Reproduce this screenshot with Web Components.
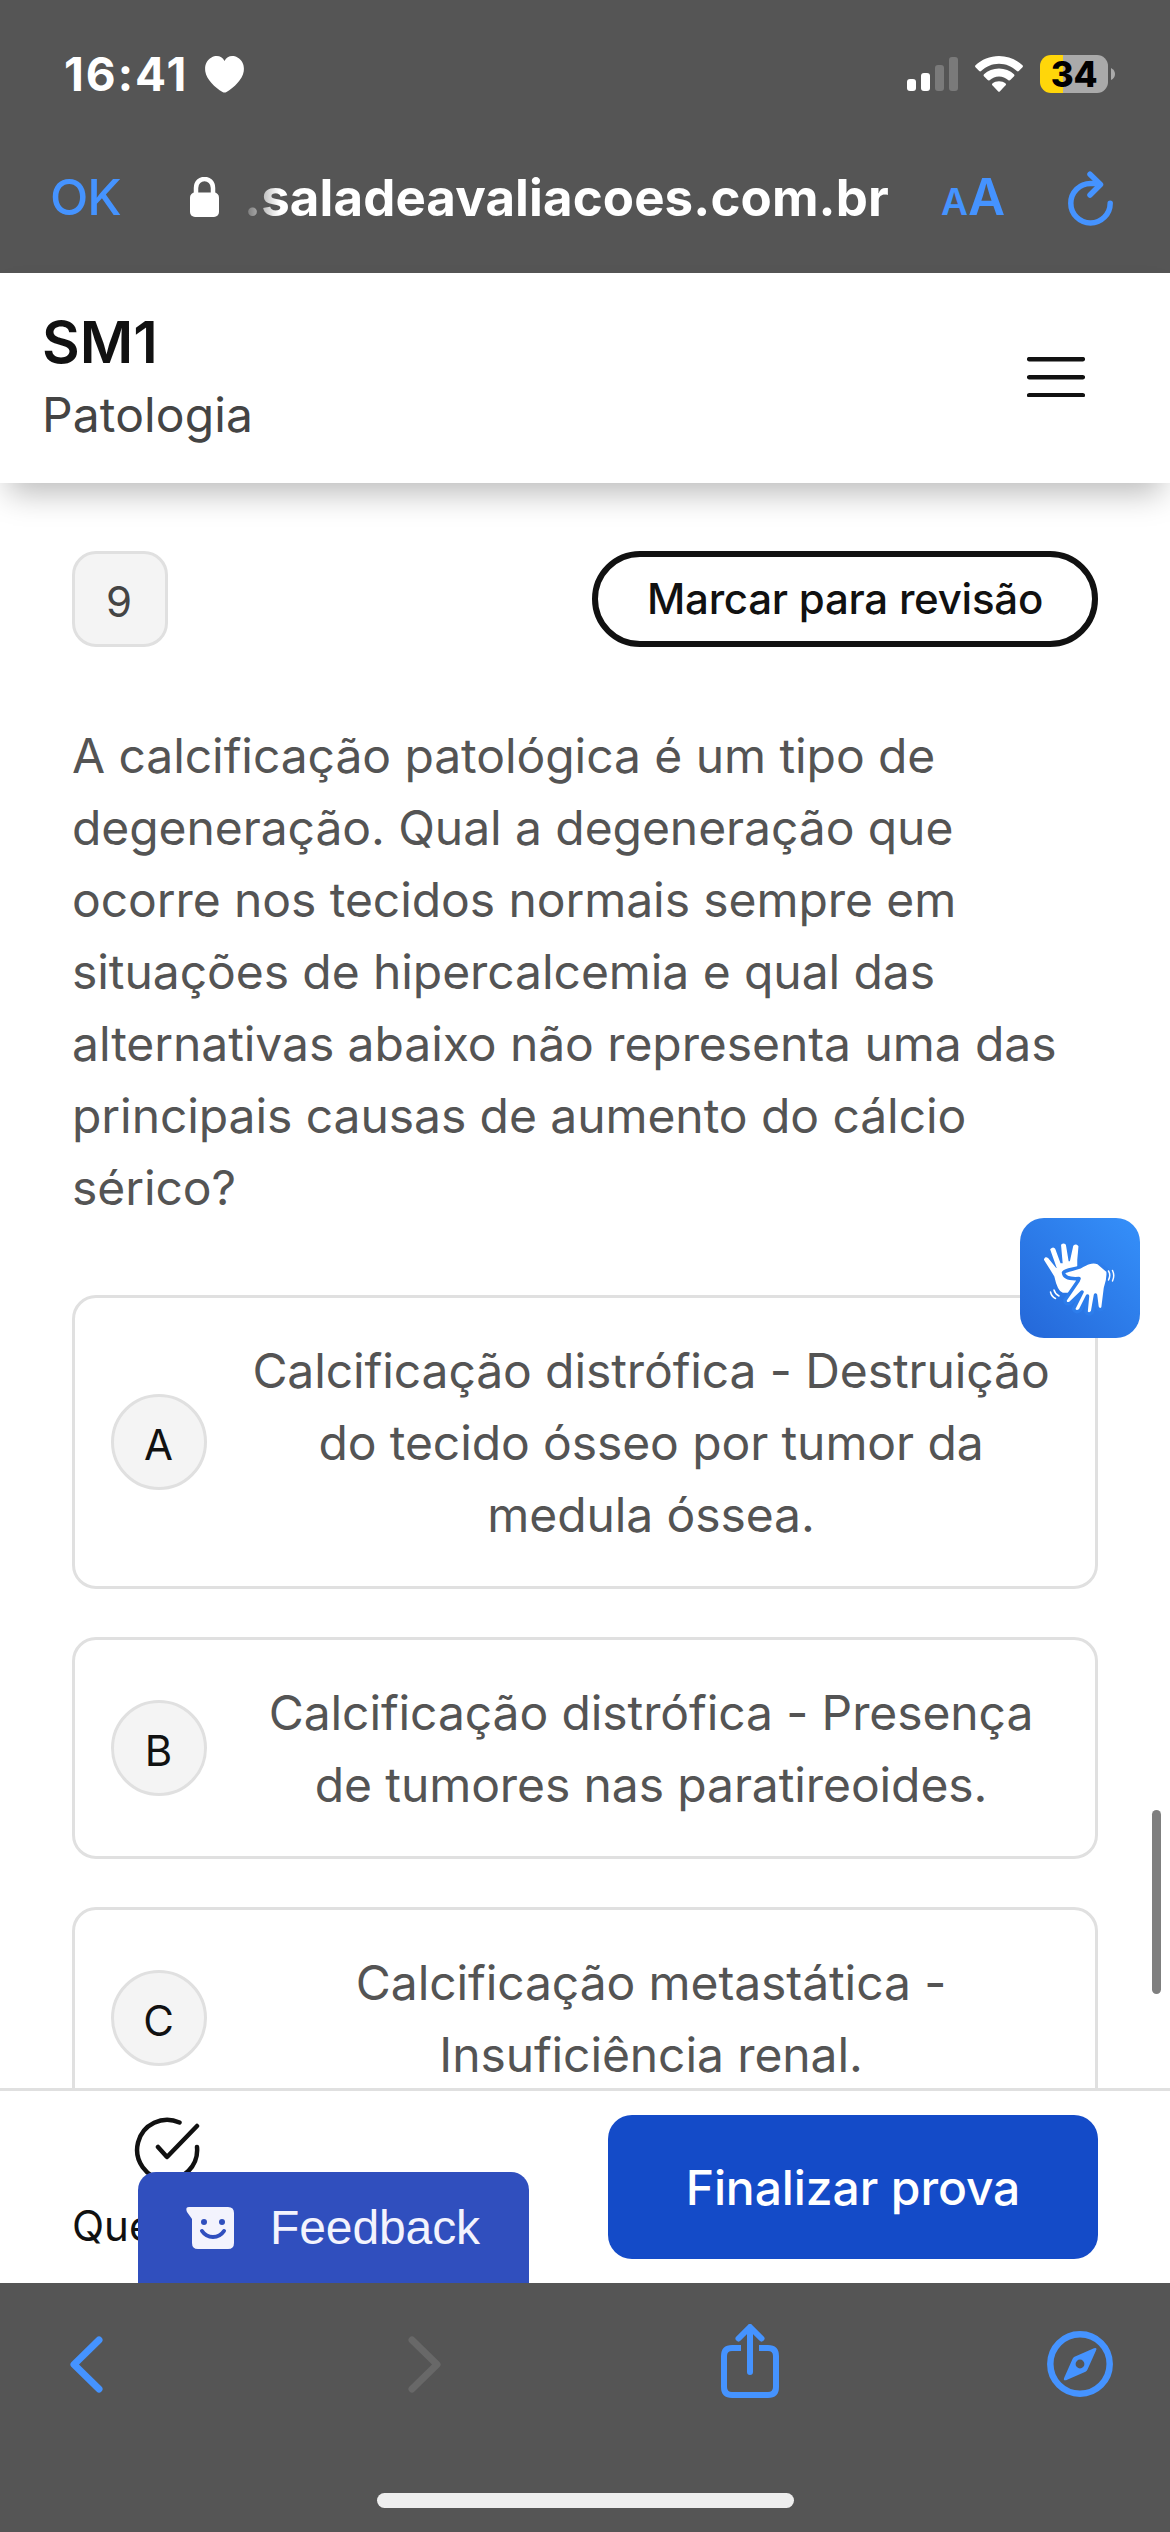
<!DOCTYPE html>
<html lang="pt-BR">
<head>
<meta charset="utf-8">
<title>Sala de Avaliações</title>
<style>
  html, body {
    margin: 0;
    padding: 0;
  }

  body {
    width: 1170px;
    height: 2532px;
    overflow: hidden;
    background: #fff;
    font-family: Inter, "Liberation Sans", sans-serif;
  }
</style>
</head>
<body>
<exam-screen>
  <status-bar slot="top" time="16:41" battery="34"></status-bar>
  <address-bar slot="top" host=".saladeavaliacoes.com.br"></address-bar>
  <exam-header slot="header">
    <span slot="title">SM1</span>
    <span slot="subject">Patologia</span>
  </exam-header>

  <exam-question number="9">
    A calcificação patológica é um tipo de degeneração. Qual a degeneração que ocorre nos tecidos normais sempre em situações de hipercalcemia e qual das alternativas abaixo não representa uma das principais causas de aumento do cálcio sérico?
    <answer-option slot="options" letter="A">Calcificação distrófica - Destruição do tecido ósseo por tumor da medula óssea.</answer-option>
    <answer-option slot="options" letter="B">Calcificação distrófica - Presença de tumores nas paratireoides.</answer-option>
    <answer-option slot="options" letter="C">Calcificação metastática - Insuficiência renal.</answer-option>
  </exam-question>

  <exam-footer slot="footer">Finalizar prova</exam-footer>
  <browser-toolbar slot="bottom"></browser-toolbar>
</exam-screen>

<script>
function define(name, html, init) {
  const template = document.createElement('template');
  template.innerHTML = html;

  customElements.define(name, class extends HTMLElement {
    constructor() {
      super();
      this.attachShadow({ mode: 'open' });
      this.shadowRoot.appendChild(template.content.cloneNode(true));
    }

    connectedCallback() {
      if (init) init(this, this.shadowRoot);
    }
  });
}

define('status-bar', `
  <style>
    :host {
      display: flex;
      justify-content: space-between;
      box-sizing: border-box;
      height: 148px;
      padding: 0 55px 0 64px;
      color: #fff;
    }
    .left, .right {
      display: flex;
      align-items: center;
      height: 148px;
    }
    .time {
      font-size: 46px;
      font-weight: 750;
      letter-spacing: 2px;
      width: 141px;
    }
    .signal { margin-right: 17px; }
    .wifi { margin-right: 17px; }
    svg { display: block; }
    .battery {
      display: flex;
      align-items: center;
      justify-content: center;
      width: 68px;
      height: 38px;
      border-radius: 11px;
      background: linear-gradient(90deg, #ffd60a 23px, #aaa 23px);
      color: #000;
      font-size: 35px;
      font-weight: 800;
      letter-spacing: -0.3px;
    }
    .nub { margin-left: 3px; }
  </style>
  <div class="left">
    <span class="time"></span>
    <svg width="39" height="37" viewBox="0 0 39 37"><path fill="#fff" d="M19.5 5C22-.5 28-1 32.500 1.500C38 4.600 39.500 10 38.700 15.500C37.500 23.500 29 31.500 21.500 36Q19.500 37 17.500 36C10 31.500 1.500 23.500 .3 15.500C-.5 10 1 4.600 6.500 1.500C11-1 17-.5 19.500 5Z"/></svg>
  </div>
  <div class="right">
    <svg class="signal" width="51" height="34" viewBox="0 0 51 34">
      <rect x="0" y="22" width="9" height="12" rx="3" fill="#fff"/>
      <rect x="14" y="16" width="9" height="18" rx="3" fill="#fff"/>
      <rect x="28" y="8" width="9" height="26" rx="3" fill="#7a7a7a"/>
      <rect x="42" y="0" width="9" height="34" rx="3" fill="#7a7a7a"/>
    </svg>
    <svg class="wifi" width="48" height="36" viewBox="0 0 48 36" fill="#fff">
      <path d="M24 0C33 0 41.500 3.600 47.500 9.300Q48.400 10.200 47.500 11.200L43.800 15.100Q42.900 16 41.900 15.100C37 10.500 30.800 7.800 24 7.800S11 10.500 6.100 15.100Q5.100 16 4.200 15.100L.5 11.200Q-.4 10.200 .5 9.300C6.500 3.600 15 0 24 0Z"/>
      <path d="M24 12.500C29.900 12.500 35 14.600 39 18.200Q40 19.200 39.100 20.200L35.300 24.100Q34.400 25 33.400 24.200C30.700 21.900 27.500 20.400 24 20.400S17.300 21.900 14.600 24.200Q13.600 25 12.700 24.100L8.900 20.200Q8 19.200 9 18.200C13 14.600 18.100 12.500 24 12.500Z"/>
      <path d="M24 25.200C26.500 25.200 28.800 26 30.600 27.400Q31.500 28.300 30.600 29.300L25 35.200Q24 36.200 23 35.200L17.400 29.300Q16.500 28.300 17.400 27.400C19.200 26 21.500 25.200 24 25.200Z"/>
    </svg>
    <div class="battery"></div>
    <svg class="nub" width="4" height="12" viewBox="0 0 4 12"><path fill="#aaa" d="M0 0Q4 2 4 6T0 12Z"/></svg>
  </div>
`, (host, root) => {
  root.querySelector('.time').textContent = host.getAttribute('time');
  root.querySelector('.battery').textContent = host.getAttribute('battery');
});

define('address-bar', `
  <style>
    :host {
      display: flex;
      align-items: center;
      box-sizing: border-box;
      height: 125px;
      padding: 0 56px 27px 50px;
      color: #4593ff;
    }
    .ok {
      width: 140px;
      font-size: 50px;
      font-weight: 550;
      letter-spacing: -1px;
    }
    .host {
      width: 722px;
      padding-left: 25px;
      box-sizing: border-box;
      color: #fff;
      font-size: 51px;
      font-weight: 750;
      letter-spacing: 0.1px;
      white-space: nowrap;
      -webkit-mask-image: linear-gradient(90deg, transparent 18px, #000 60px);
      mask-image: linear-gradient(90deg, transparent 18px, #000 60px);
    }
    .size {
      display: flex;
      align-items: baseline;
      font-weight: 600;
      line-height: 60px;
      padding-top: 5px;
    }
    .size small { font-size: 37px; }
    .size span { font-size: 51px; }
    .gap { flex: 1; }
    svg { display: block; }
    .reload { margin-top: 4px; }
  </style>
  <span class="ok">OK</span>
  <svg width="29" height="40" viewBox="0 0 29 40">
    <rect y="15.500" width="29" height="24.500" rx="5" fill="#fff"/>
    <path d="M6 18V11C6 -1 23 -1 23 11V18" fill="none" stroke="#fff" stroke-width="4.500"/>
  </svg>
  <span class="host"></span>
  <span class="size"><small>A</small><span>A</span></span>
  <span class="gap"></span>
  <svg class="reload" width="46" height="56" viewBox="0 0 46 56" fill="none" stroke="#4593ff" stroke-width="5.500" stroke-linecap="round" stroke-linejoin="round">
    <path d="M42.200 32.200A19.700 19.700 0 1 1 22.500 12.500H29"/>
    <path d="M22 3.200L32.500 13.500L22 24"/>
  </svg>
`, (host, root) => {
  root.querySelector('.host').textContent = host.getAttribute('host');
});

define('exam-header', `
  <style>
    :host {
      display: flex;
      justify-content: space-between;
      box-sizing: border-box;
      height: 210px;
      padding: 34px 85px 0 42px;
      background: #fff;
      box-shadow: 0 18px 30px -8px rgba(0, 0, 0, 0.27);
    }
    .title {
      color: #111;
      font-size: 58px;
      font-weight: 600;
      line-height: 70px;
      letter-spacing: 0;
    }
    .subject {
      padding-top: 2px;
      color: #444;
      font-size: 48px;
      line-height: 72px;
      letter-spacing: 0.1px;
    }
    svg { margin-top: 50px; }
  </style>
  <div>
    <div class="title"><slot name="title"></slot></div>
    <div class="subject"><slot name="subject"></slot></div>
  </div>
  <svg width="58" height="40" viewBox="0 0 58 40" stroke="#111" stroke-width="4.500" stroke-linecap="round">
    <path d="M2.200 2.200H55.800M2.200 20.200H55.800M2.200 38.200H55.800"/>
  </svg>
`);

define('exam-question', `
  <style>
    :host {
      display: block;
      padding: 68px 72px 0;
    }
    .head {
      display: flex;
      justify-content: space-between;
      margin-bottom: 73px;
    }
    .number {
      display: flex;
      align-items: center;
      justify-content: center;
      box-sizing: border-box;
      width: 96px;
      height: 96px;
      padding: 5px 2px 0 0;
      border: 3px solid #e0e0e0;
      border-radius: 24px;
      background: #f4f4f4;
      color: #444;
      font-size: 42px;
    }
    button {
      box-sizing: border-box;
      width: 506px;
      height: 96px;
      padding: 0 0 2px;
      border: 6px solid #111;
      border-radius: 48px;
      background: #fff;
      color: #111;
      font: 500 42px Inter, sans-serif;
      letter-spacing: -0.25px;
    }
    .text {
      color: #545454;
      font-size: 48px;
      line-height: 72px;
      letter-spacing: -0.07px;
    }
    .options {
      display: flex;
      flex-direction: column;
      gap: 48px;
      margin-top: 71px;
    }
  </style>
  <div class="head">
    <div class="number"></div>
    <button>Marcar para revisão</button>
  </div>
  <div class="text"><slot></slot></div>
  <div class="options"><slot name="options"></slot></div>
`, (host, root) => {
  root.querySelector('.number').textContent = host.getAttribute('number');
});

define('answer-option', `
  <style>
    :host {
      display: flex;
      align-items: center;
      gap: 36px;
      padding: 37px 36px 35px;
      border: 3px solid #e0e0e0;
      border-radius: 24px;
      background: #fff;
    }
    .letter {
      display: flex;
      flex: none;
      align-items: center;
      justify-content: center;
      box-sizing: border-box;
      width: 96px;
      height: 96px;
      margin-top: -2px;
      padding: 5px 1px 0 0;
      border: 3px solid #e0e0e0;
      border-radius: 50%;
      background: #f4f4f4;
      color: #111;
      font-size: 42px;
      letter-spacing: 0;
    }
    .text {
      flex: 1;
      color: #545454;
      font-size: 48px;
      line-height: 72px;
      letter-spacing: -0.1px;
      text-align: center;
    }
  </style>
  <div class="letter"></div>
  <div class="text"><slot></slot></div>
`, (host, root) => {
  root.querySelector('.letter').textContent = host.getAttribute('letter');
});

define('libras-button', `
  <style>
    :host {
      display: block;
      width: 120px;
      height: 120px;
      border-radius: 24px;
      background: linear-gradient(45deg, #2467d8, #3590fa);
    }
    svg { display: block; }
  </style>
  <svg width="120" height="120" viewBox="0 0 120 120" fill="none" stroke-linecap="round" stroke-linejoin="round">
    <path fill="#fff" stroke="#fff" stroke-width="1.500" d="M24.700 41.500L35 58C36.500 65 39 73 43 74H50L59 62L47 60Q42 55 46 51L56.500 49V42L57.700 28.500Q56 26.500 54 28L50.500 44L48 44L45.200 27Q43.500 25.500 41.800 27L43.500 46L40 46L34.500 31Q32.500 29.500 31 31.500L37.500 50L36 51L27.500 40.500Q25.500 39 24.700 41.500Z"/>
    <path fill="#fff" stroke="#2d7deb" stroke-width="3.500" d="M43.500 54.500C46 51.500 54 51.500 60 49C66 45.500 71 42.500 78 44.500L88 53Q89 60 85.500 70L83 90Q79.500 94 77 89L75.500 77L72.500 94Q69 98 66 94L67.500 78L60.500 92Q56 96 53.500 91L62 74L50.500 85Q45 87.500 45 82L58 63L59 60.500C52 61 44 60 43.500 54.500Z"/>
    <path stroke="#fff" stroke-width="1.500" d="M88.500 53Q91 57 88.500 62M92.500 52.500Q95 57.500 92.500 63M34 72Q35 76 39 78M30.500 74Q31.500 78.500 35.500 80.500"/>
  </svg>
`);

define('feedback-tab', `
  <style>
    :host {
      display: flex;
      align-items: center;
      box-sizing: border-box;
      width: 391px;
      height: 111px;
      padding: 0 0 0 48px;
      border-radius: 18px 18px 0 0;
      background: #304fbe;
      color: #f3f3fd;
      font: 48px "Liberation Sans", sans-serif;
    }
    span { margin-left: 36px; letter-spacing: -0.1px; }
  </style>
  <svg width="48" height="42" viewBox="0 0 48 42">
    <path fill="#f3f3fd" d="M3 0H42Q48 0 48 6V36Q48 42 42 42H12Q6 42 6 36V12L1 5Q-1 0 3 0Z"/>
    <circle cx="18" cy="15" r="3" fill="#304fbe"/>
    <circle cx="36" cy="15" r="3" fill="#304fbe"/>
    <path d="M16 24Q20 30 27 30T38 24" fill="none" stroke="#304fbe" stroke-width="4" stroke-linecap="round"/>
  </svg>
  <span><slot></slot></span>
`);

define('exam-footer', `
  <style>
    :host {
      display: flex;
      justify-content: space-between;
      box-sizing: border-box;
      height: 195px;
      padding: 24px 72px 0;
      border-top: 3px solid #e0e0e0;
      background: #fff;
    }
    .questions {
      display: flex;
      flex-direction: column;
      align-items: center;
      color: #111;
      font-size: 42px;
    }
    .questions svg { margin: 0 0 13px 2px; }
    button {
      width: 490px;
      height: 144px;
      padding: 0;
      border: 0;
      border-radius: 24px;
      background: #144bc8;
      color: #fff;
      font: 500 48px Inter, sans-serif;
      letter-spacing: -0.1px;
    }
  </style>
  <div class="questions">
    <svg width="72" height="72" viewBox="0 0 72 72" fill="none" stroke="#111" stroke-width="4.500" stroke-linecap="round" stroke-linejoin="round">
      <path d="M48.500 7.500A30 30 0 1 0 66 32M66 11L36 42L27 32"/>
    </svg>
    <span>Questões</span>
  </div>
  <button><slot></slot></button>
`);

define('browser-toolbar', `
  <style>
    :host {
      display: flex;
      flex-direction: column;
      align-items: center;
      height: 249px;
      background: #555;
    }
    nav {
      display: grid;
      grid-template-columns: 338px 313px 326px 66px;
      align-items: center;
      box-sizing: border-box;
      width: 100%;
      height: 162px;
      padding-left: 70px;
    }
    .home {
      width: 417px;
      height: 15px;
      margin-top: 48px;
      border-radius: 8px;
      background: #eee;
    }
    svg { display: block; }
  </style>
  <nav>
    <svg width="33" height="57" viewBox="0 0 33 57" fill="none" stroke="#4593ff" stroke-width="7" stroke-linecap="round" stroke-linejoin="round"><path d="M29 4L4 28.500L29 53"/></svg>
    <svg width="33" height="57" viewBox="0 0 33 57" fill="none" stroke="#686868" stroke-width="7" stroke-linecap="round" stroke-linejoin="round"><path d="M4 4L29 28.500L4 53"/></svg>
    <svg width="58" height="80" viewBox="0 0 58 80" fill="none" stroke="#4593ff" stroke-width="6" stroke-linecap="round" stroke-linejoin="round">
      <path stroke-linecap="butt" d="M20 24H11Q3 24 3 32V63Q3 71 11 71H47Q55 71 55 63V32Q55 24 47 24H38"/>
      <path d="M29 48V4M17.500 14.500L29 3L40.500 14.500"/>
    </svg>
    <svg width="66" height="66" viewBox="0 0 66 66">
      <circle cx="33" cy="33" r="29.700" fill="none" stroke="#4593ff" stroke-width="6.500"/>
      <path fill="#4593ff" fill-rule="evenodd" d="M47 17.200Q50.500 16 49 19.500L40.500 38.500Q40 40 38.500 40.700L19 49.200Q16 50 17.200 46.800L25.500 28Q26 26.500 27.500 25.800ZM33 28.600A4.400 4.400 0 1 0 33 37.400A4.400 4.400 0 1 0 33 28.600Z"/>
    </svg>
  </nav>
  <div class="home"></div>
`);

define('exam-screen', `
  <style>
    :host {
      display: grid;
      grid-template-rows: 273px 210px 1605px 195px 249px;
      position: relative;
      width: 1170px;
      height: 2532px;
      overflow: hidden;
      background: #fff;
    }
    .top { background: #555; }
    .header { z-index: 1; }
    main { overflow: hidden; }
    .footer { z-index: 1; }
    /* floating widgets that sit over the page */
    libras-button {
      position: absolute;
      top: 1218px;
      right: 30px;
    }
    feedback-tab {
      position: absolute;
      z-index: 2;
      bottom: 249px;
      left: 138px;
    }
    .scroll {
      position: absolute;
      top: 1810px;
      right: 9px;
      width: 9px;
      height: 184px;
      border-radius: 5px;
      background: #7f7f7f;
    }
  </style>
  <div class="top"><slot name="top"></slot></div>
  <div class="header"><slot name="header"></slot></div>
  <main><slot></slot></main>
  <div class="footer"><slot name="footer"></slot></div>
  <div class="bottom"><slot name="bottom"></slot></div>
  <libras-button></libras-button>
  <feedback-tab>Feedback</feedback-tab>
  <div class="scroll"></div>
`);
</script>
</body>
</html>
